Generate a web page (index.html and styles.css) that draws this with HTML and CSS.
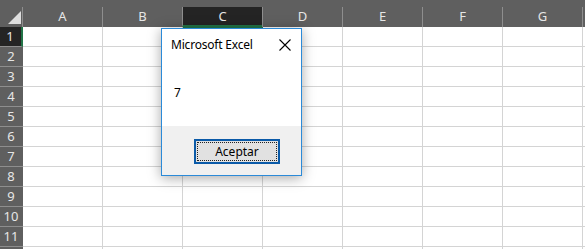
FILE: index.html
```html
<!DOCTYPE html>
<html>
<head>
<meta charset="utf-8">
<link rel="stylesheet" href="styles.css">
</head>
<body>
<div class="sheet">
  <div class="hdr">
    <div class="corner"><span class="tri"></span></div>
    <div class="col">A</div>
    <div class="col">B</div>
    <div class="col sel">C</div>
    <div class="col">D</div>
    <div class="col">E</div>
    <div class="col">F</div>
    <div class="col">G</div>
    <div class="col"></div>
  </div>
  <div class="row"><div class="rh sel">1</div><div class="cell"></div><div class="cell"></div><div class="cell active"></div><div class="cell"></div><div class="cell"></div><div class="cell"></div><div class="cell"></div><div class="cell"></div></div>
  <div class="row"><div class="rh">2</div><div class="cell"></div><div class="cell"></div><div class="cell"></div><div class="cell"></div><div class="cell"></div><div class="cell"></div><div class="cell"></div><div class="cell"></div></div>
  <div class="row"><div class="rh">3</div><div class="cell"></div><div class="cell"></div><div class="cell"></div><div class="cell"></div><div class="cell"></div><div class="cell"></div><div class="cell"></div><div class="cell"></div></div>
  <div class="row"><div class="rh">4</div><div class="cell"></div><div class="cell"></div><div class="cell"></div><div class="cell"></div><div class="cell"></div><div class="cell"></div><div class="cell"></div><div class="cell"></div></div>
  <div class="row"><div class="rh">5</div><div class="cell"></div><div class="cell"></div><div class="cell"></div><div class="cell"></div><div class="cell"></div><div class="cell"></div><div class="cell"></div><div class="cell"></div></div>
  <div class="row"><div class="rh">6</div><div class="cell"></div><div class="cell"></div><div class="cell"></div><div class="cell"></div><div class="cell"></div><div class="cell"></div><div class="cell"></div><div class="cell"></div></div>
  <div class="row"><div class="rh">7</div><div class="cell"></div><div class="cell"></div><div class="cell"></div><div class="cell"></div><div class="cell"></div><div class="cell"></div><div class="cell"></div><div class="cell"></div></div>
  <div class="row"><div class="rh">8</div><div class="cell"></div><div class="cell"></div><div class="cell"></div><div class="cell"></div><div class="cell"></div><div class="cell"></div><div class="cell"></div><div class="cell"></div></div>
  <div class="row"><div class="rh">9</div><div class="cell"></div><div class="cell"></div><div class="cell"></div><div class="cell"></div><div class="cell"></div><div class="cell"></div><div class="cell"></div><div class="cell"></div></div>
  <div class="row"><div class="rh">10</div><div class="cell"></div><div class="cell"></div><div class="cell"></div><div class="cell"></div><div class="cell"></div><div class="cell"></div><div class="cell"></div><div class="cell"></div></div>
  <div class="row"><div class="rh">11</div><div class="cell"></div><div class="cell"></div><div class="cell"></div><div class="cell"></div><div class="cell"></div><div class="cell"></div><div class="cell"></div><div class="cell"></div></div>
  <div class="row"><div class="rh"></div><div class="cell"></div><div class="cell"></div><div class="cell"></div><div class="cell"></div><div class="cell"></div><div class="cell"></div><div class="cell"></div><div class="cell"></div></div>
</div>

<div class="dialog">
  <div class="titlebar">
    <span class="title">Microsoft Excel</span>
    <svg class="close" width="12" height="12" viewBox="0 0 12 12"><path d="M0.5 0.5 L11.5 11.5 M11.5 0.5 L0.5 11.5" stroke="#000" stroke-width="1.1" fill="none"/></svg>
  </div>
  <div class="msg">7</div>
  <div class="footer">
    <button class="btn"><span class="focus">Aceptar</span></button>
  </div>
</div>
</body>
</html>
```
FILE: styles.css
```css
html, body {
  margin: 0;
  padding: 0;
  background: #fff;
  overflow: hidden;
}
body {
  width: 585px;
  height: 249px;
  font-family: "Segoe UI", "Noto Sans", "Open Sans", sans-serif;
}
.sheet {
  width: 585px;
  height: 249px;
  overflow: hidden;
}
.hdr {
  display: flex;
  height: 27px;
  background: #5f5f5f;
  box-sizing: border-box;
  padding-top: 7px;
}
.corner {
  flex: 0 0 23px;
  position: relative;
}
.tri {
  position: absolute;
  left: 8px;
  top: 4px;
  width: 13px;
  height: 13px;
  background: #dedede;
  clip-path: polygon(100% 0, 100% 100%, 0 100%);
}
.col {
  flex: 0 0 80px;
  box-sizing: border-box;
  border-left: 1px solid #8e8e8e;
  margin-left: -1px;
  margin-right: 1px;
  height: 20px;
  color: #e6e6e6;
  font-size: 13px;
  line-height: 19px;
  text-align: center;
}
.col.sel {
  background: #242424;
  border-bottom: 2px solid #217346;
  line-height: 18px;
}
.row {
  display: flex;
  height: 20px;
  box-sizing: border-box;
}
.rh {
  flex: 0 0 23px;
  box-sizing: border-box;
  background: #5f5f5f;
  color: #e6e6e6;
  border-bottom: 1px solid #8e8e8e;
  font-size: 13px;
  line-height: 19px;
  text-align: center;
  padding-right: 1px;
}
.rh.sel {
  background: #242424;
  border-right: 2px solid #217346;
}
.cell {
  flex: 0 0 80px;
  box-sizing: border-box;
  border-right: 1px solid #d4d4d4;
  border-bottom: 1px solid #d4d4d4;
}
.cell.active {
  border: 2px solid #217346;
}
.dialog {
  position: absolute;
  left: 161px;
  top: 28px;
  width: 141px;
  height: 148px;
  box-sizing: border-box;
  background: #fff;
  border: 1px solid #2b8ad8;
  box-shadow: 0 2px 12px rgba(0,0,0,0.35);
  display: flex;
  flex-direction: column;
}
.titlebar {
  display: flex;
  align-items: center;
  justify-content: space-between;
  height: 30px;
  padding: 0 10px 0 9px;
  font-size: 12px;
  color: #000;
}
.title {
  letter-spacing: -0.2px;
}
.close {
  margin-top: 1px;
}
.msg {
  flex: 1;
  padding: 25px 0 0 12px;
  font-size: 12px;
  color: #000;
}
.footer {
  height: 49px;
  background: #f0f0f0;
  display: flex;
  justify-content: flex-end;
  align-items: flex-start;
  padding: 13px 21px 0 0;
  box-sizing: border-box;
}
.btn {
  width: 86px;
  height: 25px;
  box-sizing: border-box;
  background: #e1e1e1;
  border: 2px solid #0a5aa8;
  padding: 1px;
  margin: 0;
  font-family: inherit;
  font-size: 12px;
  color: #000;
  display: flex;
}
.focus {
  flex: 1;
  border: 1px dotted #222;
  display: flex;
  align-items: center;
  justify-content: center;
}
```
